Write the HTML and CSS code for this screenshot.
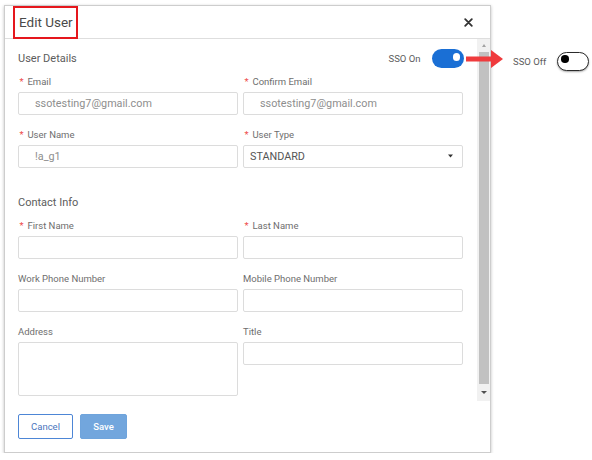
FILE: index.html
```html
<!DOCTYPE html>
<html lang="en">
<head>
<meta charset="utf-8">
<title>Edit User</title>
<link rel="stylesheet" href="styles.css">
</head>
<body>
<div class="modal">
  <div class="modal-header">
    <h1 class="modal-title">Edit User</h1>
    <button class="close" type="button" aria-label="Close">
      <svg width="9" height="9" viewBox="0 0 9 9"><path d="M1.2 1.2L7.8 7.8M7.8 1.2L1.2 7.8" stroke="#333" stroke-width="1.8" stroke-linecap="round"/></svg>
    </button>
  </div>
  <div class="modal-body">
    <div class="body-content">
      <div class="section-head">
        <h2 class="section-title">User Details</h2>
        <div class="sso">
          <span>SSO On</span>
          <span class="toggle-on"><span class="knob"></span></span>
        </div>
      </div>
      <div class="grid grid-user">
        <div class="field">
          <label class="field-label"><span class="req">*</span> Email</label>
          <input class="input" type="text" value="ssotesting7@gmail.com" readonly>
        </div>
        <div class="field">
          <label class="field-label"><span class="req">*</span> Confirm Email</label>
          <input class="input" type="text" value="ssotesting7@gmail.com" readonly>
        </div>
        <div class="field">
          <label class="field-label"><span class="req">*</span> User Name</label>
          <input class="input" type="text" value="!a_g1" readonly>
        </div>
        <div class="field">
          <label class="field-label"><span class="req">*</span> User Type</label>
          <div class="select-wrap">
            <select class="input select"><option>STANDARD</option></select>
            <svg class="select-caret" width="5" height="4" viewBox="0 0 5 4"><polygon points="0,0.5 5,0.5 2.5,3.5" fill="#333"/></svg>
          </div>
        </div>
      </div>
      <h2 class="section-title contact-title">Contact Info</h2>
      <div class="grid grid-contact">
        <div class="field">
          <label class="field-label"><span class="req">*</span> First Name</label>
          <input class="input" type="text">
        </div>
        <div class="field">
          <label class="field-label"><span class="req">*</span> Last Name</label>
          <input class="input" type="text">
        </div>
        <div class="field">
          <label class="field-label">Work Phone Number</label>
          <input class="input" type="text">
        </div>
        <div class="field">
          <label class="field-label">Mobile Phone Number</label>
          <input class="input" type="text">
        </div>
        <div class="field">
          <label class="field-label">Address</label>
          <textarea class="input textarea"></textarea>
        </div>
        <div class="field">
          <label class="field-label">Title</label>
          <input class="input" type="text">
        </div>
      </div>
    </div>
    <div class="scrollbar">
      <span class="sb-up"><span class="tri-up"></span></span>
      <span class="sb-thumb"></span>
      <span class="sb-down"><span class="tri-down"></span></span>
    </div>
  </div>
  <div class="modal-footer">
    <button class="btn btn-cancel" type="button">Cancel</button>
    <button class="btn btn-save" type="button">Save</button>
  </div>
</div>

<svg class="arrow" width="38" height="20" viewBox="0 0 38 20">
  <rect x="0" y="7.5" width="27" height="5" fill="#ef3b3d"/>
  <polygon points="25,1 37,10 25,19" fill="#ef3b3d"/>
</svg>
<div class="sso-off">
  <span>SSO Off</span>
  <span class="toggle-off"><span class="knob-off"></span></span>
</div>
</body>
</html>
```
FILE: styles.css
```css
body {
  margin: 0;
  background: #fff;
  font-family: Roboto, "Liberation Sans", Arial, sans-serif;
}

.modal {
  box-sizing: border-box;
  width: 487px;
  margin: 5px 0 0 4px;
  border: 1px solid #cdcdcd;
  background: #fff;
  box-shadow: 0 1px 3px rgba(0, 0, 0, 0.25);
}

.modal-header {
  display: flex;
  height: 32px;
  border-bottom: 1px solid #dedede;
}

.modal-title {
  box-sizing: border-box;
  position: relative;
  width: 65px;
  height: 33px;
  margin: 0 0 0 8px;
  padding-left: 4px;
  border: 2px solid #e5171d;
  font-size: 13.5px;
  font-weight: 400;
  line-height: 29px;
  color: #4a4a4a;
  white-space: nowrap;
}

.close {
  display: flex;
  align-self: center;
  margin: 0 17px 0 auto;
  padding: 0;
  border: 0;
  background: none;
  width: 9px;
  height: 9px;
}

.modal-body {
  display: flex;
  height: 362px;
  overflow: hidden;
}

.body-content {
  flex: 1;
  padding: 10px 13px 0;
}

.section-head {
  display: flex;
  align-items: center;
  justify-content: space-between;
  height: 19px;
}

.section-title {
  margin: 0;
  font-size: 11px;
  font-weight: 400;
  line-height: 13px;
  color: #5c5c5c;
}

.sso {
  display: flex;
  align-items: center;
  gap: 11.5px;
  font-size: 9.5px;
  color: #5c5c5c;
}

.toggle-on {
  position: relative;
  width: 32px;
  height: 19px;
  border-radius: 10px;
  background: #1a6fd5;
}

.toggle-on .knob {
  position: absolute;
  right: 4px;
  top: 4px;
  width: 7.5px;
  height: 7.5px;
  border-radius: 50%;
  background: #fff;
}

.grid {
  display: grid;
  grid-template-columns: 220px 220px;
  column-gap: 5px;
  row-gap: 14.33px;
  align-items: start;
}

.grid-user {
  margin-top: 7.5px;
}

.contact-title {
  margin-top: 27.87px;
}

.grid-contact {
  margin-top: 10.9px;
}

.field-label {
  display: block;
  margin-bottom: 4px;
  font-size: 9.5px;
  line-height: 12px;
  color: #6e6e6e;
  white-space: nowrap;
}

.req {
  margin: 0 1.5px;
  color: #ee4a4a;
}

.input {
  display: block;
  box-sizing: border-box;
  width: 100%;
  height: 23px;
  margin: 0;
  padding: 0 0 0 16px;
  border: 1px solid #dcdcdc;
  border-radius: 2px;
  background: #fff;
  font-family: Roboto, "Liberation Sans", Arial, sans-serif;
  font-size: 10.8px;
  color: #8e8e8e;
  outline: none;
}

.textarea {
  height: 54px;
  resize: none;
}

.select-wrap {
  position: relative;
}

.select {
  padding-left: 6px;
  color: #555;
  -webkit-appearance: none;
  appearance: none;
}

.select-caret {
  position: absolute;
  right: 10px;
  top: 9.5px;
}

.scrollbar {
  display: flex;
  flex-direction: column;
  align-items: center;
  width: 13px;
  background: #f1f1f1;
}

.sb-up {
  display: flex;
  align-items: center;
  justify-content: center;
  height: 12.7px;
}

.sb-thumb {
  flex: 1;
  width: 10px;
  background: #c1c1c1;
}

.sb-down {
  display: flex;
  align-items: center;
  justify-content: center;
  height: 17px;
}

.tri-up {
  width: 0;
  height: 0;
  border-left: 2.5px solid transparent;
  border-right: 2.5px solid transparent;
  border-bottom: 3px solid #a3a3a3;
}

.tri-down {
  width: 0;
  height: 0;
  border-left: 3px solid transparent;
  border-right: 3px solid transparent;
  border-top: 3px solid #505050;
}

.modal-footer {
  display: flex;
  gap: 7px;
  padding: 13px;
}

.btn {
  box-sizing: border-box;
  height: 25px;
  padding: 0;
  border-radius: 2px;
  font-family: Roboto, "Liberation Sans", Arial, sans-serif;
  font-size: 9.5px;
}

.btn-cancel {
  width: 55px;
  border: 1px solid #4d86d6;
  background: #fff;
  color: #4a75bd;
}

.btn-save {
  width: 47px;
  border: 1px solid #6fa4dc;
  background: #72a6dd;
  color: #fff;
  font-weight: 500;
}

.arrow {
  position: absolute;
  left: 466px;
  top: 49px;
}

.sso-off {
  position: absolute;
  left: 513px;
  top: 52px;
  display: flex;
  align-items: center;
  gap: 11px;
  height: 19px;
  font-size: 9.5px;
  color: #5c5c5c;
}

.toggle-off {
  position: relative;
  box-sizing: border-box;
  width: 32px;
  height: 19px;
  border: 1.5px solid #2b2b2b;
  border-radius: 10px;
  background: #fff;
  box-shadow: 0 1px 2px rgba(0, 0, 0, 0.35);
}

.knob-off {
  position: absolute;
  left: 3px;
  top: 2px;
  width: 7.5px;
  height: 7.5px;
  border-radius: 50%;
  background: #000;
}
```
